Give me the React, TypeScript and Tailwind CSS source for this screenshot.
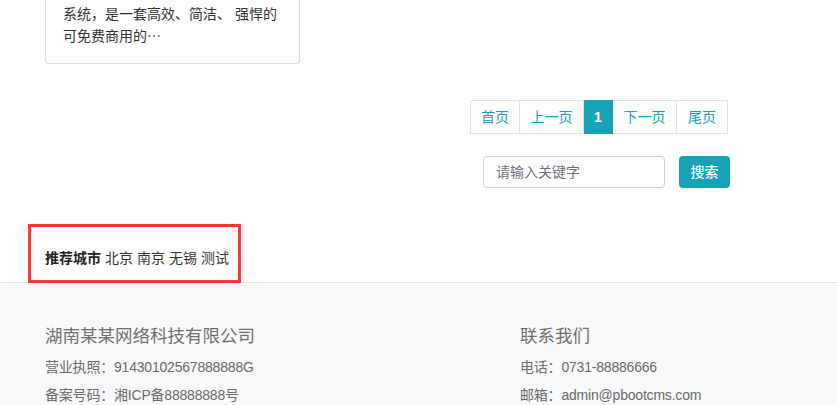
import React from "react";

const font = { fontFamily: '"Liberation Sans", "Noto Sans CJK SC", sans-serif' };

export default function App() {
  const pages = [
    { t: "首页", w: "w-[50px]", active: false },
    { t: "上一页", w: "w-[64px]", active: false },
    { t: "1", w: "w-[29px]", active: true },
    { t: "下一页", w: "w-[64px]", active: false },
    { t: "尾页", w: "w-[51px]", active: false },
  ];
  return (
    <div
      className="relative w-[837px] h-[405px] overflow-hidden bg-white text-[14px] text-[#333]"
      style={font}
    >
      {/* card */}
      <div className="ml-[45px] w-[255px] border-x border-b border-[#dcdcdc] rounded-b-[4px] pl-[17px] pt-[4px] pb-[16px] leading-[21px]">
        系统，是一套高效、简洁、 强悍的
        <br />
        可免费商用的<span className="font-['Noto_Sans_CJK_SC']">…</span>
      </div>

      {/* pagination */}
      <div className="mt-[36px] flex justify-end pr-[109px]">
        <div className="flex">
          {pages.map((p, i) => (
            <div
              key={p.t}
              className={`${p.w} h-[34px] flex items-center justify-center border-y border-r ${
                i === 0 ? "border-l" : ""
              } ${
                p.active
                  ? "bg-[#17a2b8] border-[#17a2b8] text-white font-bold"
                  : "bg-white border-[#dee2e6] text-[#17a2b8]"
              }`}
            >
              {p.t}
            </div>
          ))}
        </div>
      </div>

      {/* search */}
      <div className="mt-[22px] flex">
        <div className="ml-[483px] w-[182px] h-[32px] border border-[#ced4da] rounded-[4px] flex items-center pl-[12px] text-[#6c757d]">
          请输入关键字
        </div>
        <div className="ml-[14px] w-[51px] h-[32px] rounded-[4px] bg-[#17a2b8] text-white flex items-center justify-center font-medium">
          搜索
        </div>
      </div>

      {/* cities */}
      <div className="mt-[60px] pl-[45px] pb-[13px] leading-[21px] flex gap-[4px]">
        <span className="font-bold text-[#222]">推荐城市</span>
        <span>北京</span>
        <span>南京</span>
        <span>无锡</span>
        <span>测试</span>
      </div>

      {/* footer */}
      <div className="border-t border-[#e3e5e8] bg-[#f8f9fa] pt-[40px] pl-[45px] flex text-[#6a6a6a]">
        <div className="w-[475px]">
          <div className="text-[17.5px] leading-[27px] text-[#707070]">湖南某某网络科技有限公司</div>
          <div className="mt-[7px] leading-[21px] tracking-[-0.2px]">营业执照：91430102567888888G</div>
          <div className="mt-[7px] leading-[21px] tracking-[-0.2px]">备案号码：湘ICP备88888888号</div>
        </div>
        <div>
          <div className="text-[17.5px] leading-[27px] text-[#707070]">联系我们</div>
          <div className="mt-[7px] leading-[21px] tracking-[-0.2px]">电话：0731-88886666</div>
          <div className="mt-[7px] leading-[21px] tracking-[-0.2px]">邮箱：admin@pbootcms.com</div>
        </div>
      </div>

      {/* red annotation box */}
      <div className="absolute left-[28px] top-[224px] w-[213px] h-[59px] border-[3px] border-[#ff3636] pointer-events-none" />
    </div>
  );
}
